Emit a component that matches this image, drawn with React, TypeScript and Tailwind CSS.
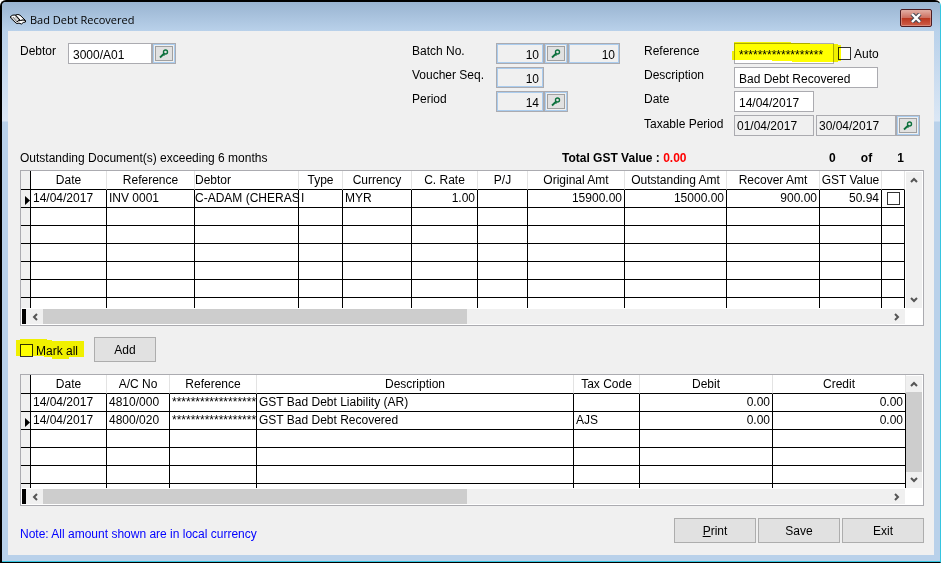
import { useState } from "react";

type Column = { title: string; width: string; align?: string; head?: string; cell?: string };
type Row = { cells: string[]; active?: boolean; check?: boolean };

const CELL = "overflow-hidden px-[2px]";

const DOC_COLUMNS: Column[] = [
  { title: "Date",            width: "w-[76px]" },
  { title: "Reference",       width: "w-[88px]" },
  { title: "Debtor",          width: "w-[104px]", head: "text-left", cell: "overflow-visible px-0" },
  { title: "Type",            width: "w-[44px]" },
  { title: "Currency",        width: "w-[69px]" },
  { title: "C. Rate",         width: "w-[66px]",  align: "text-right" },
  { title: "P/J",             width: "w-[50px]" },
  { title: "Original Amt",    width: "w-[97px]",  align: "text-right" },
  { title: "Outstanding Amt", width: "w-[102px]", align: "text-right" },
  { title: "Recover Amt",     width: "w-[93px]",  align: "text-right" },
  { title: "GST Value",       width: "w-[62px]",  align: "text-right" },
  { title: "",                width: "w-[23px]" },
];

const DOC_ROWS: Row[] = [
  {
    cells: ["14/04/2017", "INV 0001", "C-ADAM (CHERAS", "I", "MYR", "1.00", "", "15900.00", "15000.00", "900.00", "50.94"],
    active: true,
    check: true,
  },
];

const ENTRY_COLUMNS: Column[] = [
  { title: "Date",        width: "w-[76px]" },
  { title: "A/C No",      width: "w-[63px]" },
  { title: "Reference",   width: "w-[87px]" },
  { title: "Description", width: "w-[317px]" },
  { title: "Tax Code",    width: "w-[66px]" },
  { title: "Debit",       width: "w-[133px]", align: "text-right" },
  { title: "Credit",      width: "w-[133px]", align: "text-right" },
];

const ENTRY_ROWS: Row[] = [
  { cells: ["14/04/2017", "4810/000", "******************", "GST Bad Debt Liability (AR)", "", "0.00", "0.00"] },
  { cells: ["14/04/2017", "4800/020", "******************", "GST Bad Debt Recovered", "AJS", "0.00", "0.00"], active: true },
];

const CHECKBOX = "block size-[13px] shrink-0 appearance-none border border-[#333] checked:bg-[#333]";

function Chevron({ turn }: { turn: string }) {
  return (
    <svg viewBox="0 0 8 8" className={`size-2 ${turn}`}>
      <path d="M1 6l3-3 3 3" fill="none" stroke="#555" strokeWidth="2" />
    </svg>
  );
}

function LookupButton({ label }: { label: string }) {
  return (
    <button type="button" aria-label={label} className="flex h-[21px] w-6 shrink-0 border border-[#ababb0] bg-[#f0f0f0] p-px ring-1 ring-[#aaccee] ring-inset">
      <span className="m-px flex flex-1 items-center justify-center self-stretch border border-[#a0a0a0] bg-[#e1e1e1]">
        <svg viewBox="0 0 10 10" className="size-[10px]" fill="none" stroke="#0c703c">
          <circle cx="6.5" cy="3" r="2" strokeWidth="1.4" />
          <path d="M5.200 4.500L1 8.500" strokeWidth="1.8" />
          <path d="M4 5l1.500 1.500" strokeWidth="1.2" />
        </svg>
      </span>
    </button>
  );
}

function Field({ id, value, className, readOnly }: { id: string; value: string; className: string; readOnly?: boolean }) {
  return (
    <input
      id={id}
      aria-label={id}
      type="text"
      defaultValue={value}
      readOnly={readOnly}
      className={`h-[21px] min-w-0 border border-[#ababb0] outline-none ${className}`}
    />
  );
}

const WHITE = "bg-white pl-1 pt-[2px]";
const BLUE = "bg-[#f0f0f0] pr-1 pt-[2px] text-right ring-1 ring-inset ring-[#aaccee]";
const GREY = "bg-[#f0f0f0] pl-[2px]";

function Grid({ columns, rows, blank, last, thumb, label }: {
  columns: Column[]; rows: Row[]; blank: number; last: string; thumb?: boolean; label: string;
}) {
  const filler = Array.from({ length: blank }, (): Row => ({ cells: [] }));

  return (
    <div className="border border-[#ababb0] bg-white">
      <div className="flex">
        <div className="min-w-0 flex-1">
          <table aria-label={label} className="w-full table-fixed border-separate border-spacing-0">
            <thead>
              <tr>
                <th className="h-[19px] w-[10px] border-r border-b border-black bg-[#f0f0f0] p-0" />
                {columns.map((c, i) => (
                  <th
                    key={i}
                    className={`${c.width} overflow-hidden border-r border-b border-r-[#e3e3e3] border-b-black p-0 leading-[18px] font-normal whitespace-nowrap ${c.head ?? "text-center"}`}
                  >
                    {c.title}
                  </th>
                ))}
              </tr>
            </thead>
            <tbody>
              {[...rows, ...filler].map((r, i) => (
                <tr key={i}>
                  <td className="h-[18px] border-r border-b border-black bg-[#f0f0f0] p-0">
                    {r.active && (
                      <svg viewBox="0 0 5 9" className="mt-[3px] ml-auto h-[9px] w-[5px]">
                        <path d="M0 0l5 4.5L0 9z" />
                      </svg>
                    )}
                  </td>
                  {columns.map((c, j) => (
                    <td
                      key={j}
                      className={`border-r border-b border-black py-0 leading-[17px] whitespace-nowrap ${c.cell ?? CELL} ${c.align ?? "text-left"}`}
                    >
                      {r.check && j === columns.length - 1
                        ? <input type="checkbox" aria-label="Select document" className={`${CHECKBOX} mx-auto bg-white`} />
                        : r.cells[j]}
                    </td>
                  ))}
                </tr>
              ))}
              <tr>
                <td className={`${last} border-r border-black bg-[#f0f0f0] p-0`} />
                {columns.map((_, j) => <td key={j} className="border-r border-black p-0" />)}
              </tr>
            </tbody>
          </table>
        </div>

        {/* Vertical scroll bar */}
        <div className="mx-px mt-px flex w-4 flex-col items-center bg-[#f0f0f0]">
          <span className="flex h-4 items-center"><Chevron turn="" /></span>
          <span className={`w-full flex-1 ${thumb ? "bg-[#cdcdcd]" : ""}`} />
          <span className="flex h-4 items-center"><Chevron turn="rotate-180" /></span>
        </div>
      </div>

      {/* Horizontal scroll bar */}
      <div className="mt-px mr-[18px] mb-px ml-px flex h-[15px] bg-[#f0f0f0]">
        <span className="w-1 bg-black" />
        <span className="flex w-[17px] items-center justify-center"><Chevron turn="-rotate-90" /></span>
        <span className="w-[48%] bg-[#cdcdcd]" />
        <span className="ml-auto flex w-4 items-center justify-center"><Chevron turn="rotate-90" /></span>
      </div>
    </div>
  );
}

export default function App() {
  const [auto,    setAuto]    = useState(false);
  const [markAll, setMarkAll] = useState(false);

  const button = "h-[25px] border border-[#adadad] bg-[#e1e1e1] text-center";

  return (
    <div className="flex min-h-screen flex-col bg-white pb-px font-['Liberation_Sans',Arial,sans-serif] text-[12px] leading-4 text-black">
      <div className="flex flex-1 flex-col rounded-t-md border-t-2 border-r border-b border-l-2 border-black border-r-[#35c5e0] bg-[linear-gradient(#b9d1ea_29px,#dbe7f5_119px,#b9d1ea_120px)] shadow-[inset_0_-1px_#35c5e0]">

        {/* Title bar */}
        <div className="flex h-[29px] items-center rounded-t-sm bg-linear-to-b from-[#99b4d1] to-[#b9d1ea] pt-[6px] pr-2 pl-2">
          <svg viewBox="0 0 16 11" className="h-[11px] w-4" stroke="#000" fill="#fff" strokeLinejoin="round">
            <path d="M.5 2.500Q2.500.5 5.500 1l5 5.500Q8 6.500 6.500 8z" />
            <path d="M5.500 1Q8-.2 10 1.200l5.500 5.300Q13 6 10.500 6.500z" />
            <path d="M6.500 8Q8 6.500 10.500 6.500 13 5.500 15.500 6.500v1.500Q13 8 11.500 10 9 8.500 6.500 9.500L.5 3.800V2.500" />
            <path d="M3 3l4 3.500M5 2.500L9 6" strokeWidth=".5" />
          </svg>
          <h1 className="ml-1 font-['Open_Sans',sans-serif] text-[11px]">Bad Debt Recovered</h1>
          <button type="button" aria-label="Close" className="mb-[3px] ml-auto flex h-[18px] w-8 items-center justify-center rounded-xs border border-[#4d1c22] bg-[linear-gradient(#e3b0a6,#cd6f60_48%,#b9351e_50%,#cf5f4a)] ring-1 ring-[#e0a79d]/60 ring-inset">
            <svg viewBox="0 0 12 10" className="h-[10px] w-3">
              <path d="M2 1l8 8M10 1L2 9" stroke="#4a4a55" strokeWidth="4.400" />
              <path d="M2 1l8 8M10 1L2 9" stroke="#fff" strokeWidth="2.400" />
            </svg>
          </button>
        </div>

        <main className="mr-[6px] mb-[7px] ml-[6px] flex-1 bg-[#f0f0f0] pt-3 pr-[10px] pl-3">

          {/* Header fields */}
          <div className="grid grid-cols-[392fr_232fr_280fr]">
            <div className="flex items-start">
              <label htmlFor="Debtor" className="w-12">Debtor</label>
              <Field id="Debtor" value="3000/A01" className={`w-[84px] ${WHITE}`} />
              <LookupButton label="Find debtor" />
            </div>

            <div className="space-y-[3px]">
              <div className="flex">
                <label htmlFor="Batch No." className="w-[84px]">Batch No.</label>
                <Field id="Batch No." value="10" className={`w-12 ${BLUE}`} readOnly />
                <LookupButton label="Find batch" />
                <Field id="Batch total" value="10" className={`w-[52px] ${BLUE}`} readOnly />
              </div>
              <div className="flex">
                <label htmlFor="Voucher Seq." className="w-[84px]">Voucher Seq.</label>
                <Field id="Voucher Seq." value="10" className={`w-12 ${BLUE}`} readOnly />
              </div>
              <div className="flex">
                <label htmlFor="Period" className="w-[84px]">Period</label>
                <Field id="Period" value="14" className={`w-12 ${BLUE}`} readOnly />
                <LookupButton label="Find period" />
              </div>
            </div>

            <div className="space-y-[3px]">
              <div className="flex">
                <label htmlFor="Reference" className="w-[90px]">Reference</label>
                <div className="relative flex">
                  <Field id="Reference" value="******************" className={`w-[100px] ${WHITE}`} />
                  <svg viewBox="0 0 110 21" className="pointer-events-none absolute -top-px -left-[2px] h-[21px] w-[110px] mix-blend-multiply">
                    <path d="M2 0h57v1h19v1h28v1h3v16h-3v1H60v-1H40v-1H0V9h2z" fill="#ff0" />
                  </svg>
                </div>
                <label className="ml-1 flex items-center gap-[3px]">
                  <input type="checkbox" checked={auto} onChange={e => setAuto(e.target.checked)} className={`${CHECKBOX} bg-white`} />
                  Auto
                </label>
              </div>
              <div className="flex">
                <label htmlFor="Description" className="w-[90px]">Description</label>
                <Field id="Description" value="Bad Debt Recovered" className={`w-36 ${WHITE}`} />
              </div>
              <div className="flex">
                <label htmlFor="Date" className="w-[90px]">Date</label>
                <Field id="Date" value="14/04/2017" className={`w-20 ${WHITE}`} />
              </div>
              <div className="flex">
                <label htmlFor="Taxable Period" className="w-[90px] pt-px">Taxable Period</label>
                <Field id="Taxable Period" value="01/04/2017" className={`mr-[2px] w-20 ${GREY}`} readOnly />
                <Field id="Taxable Period end" value="30/04/2017" className={`w-20 ${GREY}`} readOnly />
                <LookupButton label="Find taxable period" />
              </div>
            </div>
          </div>

          {/* Outstanding documents */}
          <div className="mt-[14px] mb-1 grid grid-cols-[542fr_267fr_95fr]">
            <h2>Outstanding Document(s) exceeding 6 months</h2>
            <p className="font-bold">Total GST Value : <span className="text-[#f00]">0.00</span></p>
            <p className="flex justify-between pr-5 font-bold"><span>0</span><span>of</span><span>1</span></p>
          </div>
          <Grid label="Outstanding documents" columns={DOC_COLUMNS} rows={DOC_ROWS} blank={5} last="h-[10px]" />

          <div className="mt-[11px] mb-3 flex items-center">
            <label className="relative flex w-[74px] items-center gap-[3px] pt-[2px]">
              <input type="checkbox" checked={markAll} onChange={e => setMarkAll(e.target.checked)} className={`${CHECKBOX} bg-white`} />
              Mark all
              <svg viewBox="0 0 68 20" className="pointer-events-none absolute -top-[2px] -left-1 h-5 w-[68px] mix-blend-multiply">
                <path d="M4 0h27v1h5v1h32v16H53v2H36v-2h-8v-1H0V1h4z" fill="#ff0" />
              </svg>
            </label>
            <button type="button" className={`${button} w-[62px]`}>Add</button>
          </div>

          {/* Journal entries */}
          <Grid label="Journal entries" columns={ENTRY_COLUMNS} rows={ENTRY_ROWS} blank={3} last="h-[4px]" thumb />

          <div className="mt-3 mb-3 flex">
            <p className="mt-2 text-[#00f]">Note: All amount shown are in local currency</p>
            <div className="ml-auto flex gap-[2px]">
              <button type="button" className={`${button} w-[82px]`}><u>P</u>rint</button>
              <button type="button" className={`${button} w-[82px]`}>Save</button>
              <button type="button" className={`${button} w-[82px]`}>Exit</button>
            </div>
          </div>
        </main>
      </div>
    </div>
  );
}
